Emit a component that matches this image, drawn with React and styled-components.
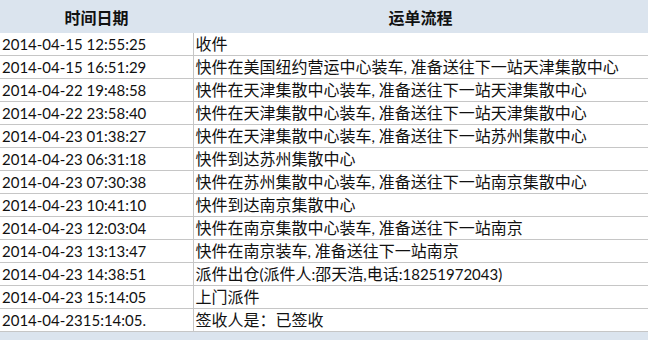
import React from 'react';
import styled, { createGlobalStyle } from 'styled-components';

const GlobalStyle = createGlobalStyle`
    html, body {
        margin: 0;
        padding: 0;
        background: #dbe4ee;
    }
    body {
        font-family: "Lato", "Noto Sans CJK SC", sans-serif;
    }
`;

const rows = [
    ['2014-04-15 12:55:25', '收件'],
    ['2014-04-15 16:51:29', '快件在美国纽约营运中心装车, 准备送往下一站天津集散中心'],
    ['2014-04-22 19:48:58', '快件在天津集散中心装车, 准备送往下一站天津集散中心'],
    ['2014-04-22 23:58:40', '快件在天津集散中心装车, 准备送往下一站天津集散中心'],
    ['2014-04-23 01:38:27', '快件在天津集散中心装车, 准备送往下一站苏州集散中心'],
    ['2014-04-23 06:31:18', '快件到达苏州集散中心'],
    ['2014-04-23 07:30:38', '快件在苏州集散中心装车, 准备送往下一站南京集散中心'],
    ['2014-04-23 10:41:10', '快件到达南京集散中心'],
    ['2014-04-23 12:03:04', '快件在南京集散中心装车, 准备送往下一站南京'],
    ['2014-04-23 13:13:47', '快件在南京装车, 准备送往下一站南京'],
    ['2014-04-23 14:38:51', '派件出仓(派件人:邵天浩,电话:18251972043)'],
    ['2014-04-23 15:14:05', '上门派件'],
    ['2014-04-2315:14:05.', '签收人是：已签收'],
];

// CJK glyphs sit a touch larger than the latin text in the original
const Mixed = ({ text }) =>
    text.split(/([\u3000-\u9fff\uff00-\uffef]+)/).map((part, i) =>
        i % 2 ? <Han key={i}>{part}</Han> : part
    );

export default function App() {
    return (
        <Page>
            <GlobalStyle />
            <Table>
                <thead>
                    <tr>
                        <Head className="time">时间日期</Head>
                        <Head>运单流程</Head>
                    </tr>
                </thead>
                <tbody>
                    {rows.map(([time, step], i) => (
                        <Row key={i}>
                            <Cell>{time}</Cell>
                            <Cell divider><Mixed text={step} /></Cell>
                        </Row>
                    ))}
                </tbody>
            </Table>
        </Page>
    );
}

const Page = styled.div`
    width: 648px;
    height: 340px;
    background: #dbe4ee;
`;

const Table = styled.table`
    width: 100%;
    border-collapse: collapse;
    table-layout: fixed;
    .time {
        width: 193px;
    }
`;

const Head = styled.th`
    height: 33px;
    padding: 0;
    font-size: 16px;
    font-weight: 700;
    color: #111;
    text-align: center;
    vertical-align: middle;
`;

const Row = styled.tr`
    background: #fff;
    border-bottom: 1px solid #c6c6c6;
`;

const Cell = styled.td`
    height: 22px;
    padding: 0 0 0 2px;
    font-size: 15px;
    color: #111;
    white-space: nowrap;
    overflow: hidden;
    line-height: 22px;
    border-left: ${p => (p.divider ? '1px solid #c6c6c6' : 'none')};
`;

const Han = styled.span`
    font-size: 16px;
`;
